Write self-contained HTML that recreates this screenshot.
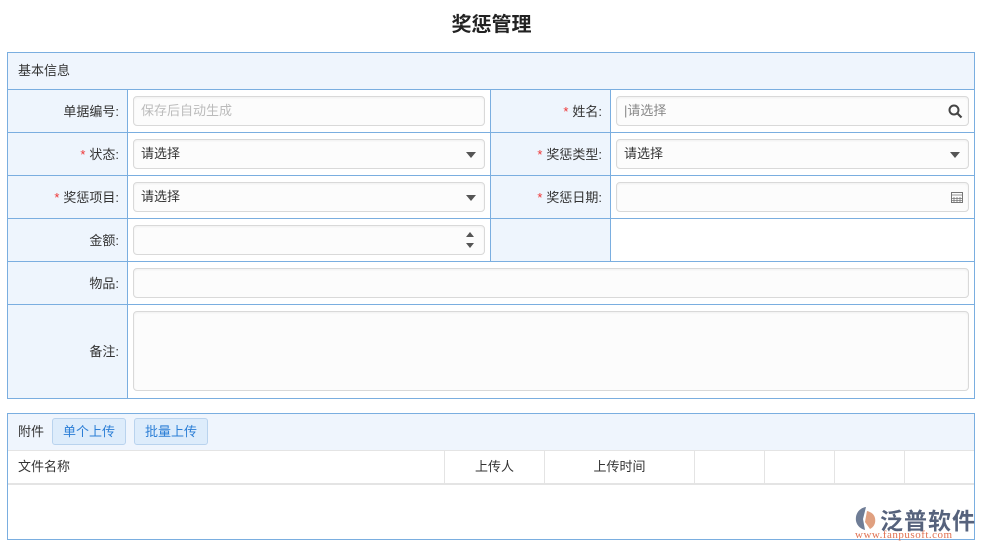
<!DOCTYPE html>
<html><head><meta charset="utf-8"><style>
*{box-sizing:border-box;margin:0;padding:0}
body{width:983px;height:551px;background:#fff;font-family:"Liberation Sans","Noto Sans CJK SC",sans-serif;font-size:13px;color:#333;position:relative;overflow:hidden}
.a{position:absolute}
.title{left:0;width:983px;top:8px;text-align:center;font-size:20px;font-weight:bold;color:#222}
.line{position:absolute;background:#7aaee0}
.lbl{position:absolute;background:#eef5fd;text-align:right;padding-right:8px;line-height:43px}
.star{color:#e33;margin-right:4px}
.inp{position:absolute;border:1px solid #d9d9d9;border-radius:4px;background:#fcfcfc;height:30px;line-height:28px;padding-left:7px;box-shadow:inset 0 1px 2px rgba(0,0,0,.05)}
.tri{position:absolute;right:8px;top:12px;width:0;height:0;border-left:5px solid transparent;border-right:5px solid transparent;border-top:6px solid #555}
.btn{position:absolute;top:418px;height:27px;line-height:25px;padding:0 10px;background:#ddecfb;border:1px solid #b9d3ee;border-radius:3px;color:#2b7ed6}
.th{position:absolute;top:450px;height:33px;line-height:33px;border-left:1px solid #e4e4e4}
</style></head><body>
<div class="a title">奖惩管理</div>
<div class="a" style="left:7px;top:52px;width:968px;height:347px;border:1px solid #7aaee0;background:#fff"></div>
<div class="a" style="left:8px;top:53px;width:966px;height:36px;background:#eff5fd;line-height:36px;padding-left:10px">基本信息</div>
<div class="lbl" style="left:8px;top:90px;width:119px;height:42px">单据编号:</div>
<div class="lbl" style="left:8px;top:133px;width:119px;height:42px"><span class="star">*</span>状态:</div>
<div class="lbl" style="left:8px;top:176px;width:119px;height:42px"><span class="star">*</span>奖惩项目:</div>
<div class="lbl" style="left:8px;top:219px;width:119px;height:42px">金额:</div>
<div class="lbl" style="left:8px;top:262px;width:119px;height:42px">物品:</div>
<div class="lbl" style="left:8px;top:305px;width:119px;height:93px;line-height:93px">备注:</div>
<div class="lbl" style="left:491px;top:90px;width:119px;height:42px"><span class="star">*</span>姓名:</div>
<div class="lbl" style="left:491px;top:133px;width:119px;height:42px"><span class="star">*</span>奖惩类型:</div>
<div class="lbl" style="left:491px;top:176px;width:119px;height:42px"><span class="star">*</span>奖惩日期:</div>
<div class="lbl" style="left:491px;top:219px;width:119px;height:42px"></div>
<div class="line" style="left:7px;top:89px;width:968px;height:1px"></div>
<div class="line" style="left:7px;top:132px;width:968px;height:1px"></div>
<div class="line" style="left:7px;top:175px;width:968px;height:1px"></div>
<div class="line" style="left:7px;top:218px;width:968px;height:1px"></div>
<div class="line" style="left:7px;top:261px;width:968px;height:1px"></div>
<div class="line" style="left:7px;top:304px;width:968px;height:1px"></div>
<div class="line" style="left:127px;top:89px;width:1px;height:309px"></div>
<div class="line" style="left:490px;top:89px;width:1px;height:172px"></div>
<div class="line" style="left:610px;top:89px;width:1px;height:172px"></div>
<div class="inp" style="left:133px;top:96px;width:352px;color:#bbb">保存后自动生成</div>
<div class="inp" style="left:133px;top:139px;width:352px">请选择<div class="tri"></div></div>
<div class="inp" style="left:133px;top:182px;width:352px">请选择<div class="tri"></div></div>
<div class="inp" style="left:133px;top:225px;width:352px"><div class="a" style="right:10px;top:6px;border-left:4px solid transparent;border-right:4px solid transparent;border-bottom:5px solid #555"></div><div class="a" style="right:10px;top:17px;border-left:4px solid transparent;border-right:4px solid transparent;border-top:5px solid #555"></div></div>
<div class="inp" style="left:616px;top:96px;width:353px;color:#888">|请选择<svg class="a" style="right:5px;top:7px" width="15" height="15" viewBox="0 0 15 15"><circle cx="6" cy="6" r="4.5" fill="none" stroke="#444" stroke-width="2"/><path d="M9.5 9.5L13.5 13.5" stroke="#444" stroke-width="2.2"/></svg></div>
<div class="inp" style="left:616px;top:139px;width:353px">请选择<div class="tri"></div></div>
<div class="inp" style="left:616px;top:182px;width:353px"><svg class="a" style="right:5px;top:8px" width="12" height="12" viewBox="0 0 12 12"><rect x="0.5" y="1.5" width="11" height="10" fill="none" stroke="#777"/><path d="M0.5 4h11M3 6v5M6 6v5M9 6v5M0.5 7.5h11M0.5 9.5h11" stroke="#777" stroke-width=".8"/></svg></div>
<div class="inp" style="left:133px;top:268px;width:836px"></div>
<div class="inp" style="left:133px;top:311px;width:836px;height:80px"></div>
<div class="a" style="left:7px;top:413px;width:968px;height:127px;border:1px solid #7aaee0"></div>
<div class="a" style="left:8px;top:414px;width:966px;height:36px;background:#eff5fd;line-height:36px;padding-left:10px">附件</div>
<div class="btn" style="left:52px">单个上传</div>
<div class="btn" style="left:134px">批量上传</div>
<div class="a" style="left:8px;top:450px;width:966px;height:1px;background:#e4e4e4"></div>
<div class="a" style="left:8px;top:483px;width:966px;height:2px;background:#e4e4e4"></div>
<div class="th" style="left:8px;width:436px;border:none;padding-left:10px">文件名称</div>
<div class="th" style="left:444px;width:100px;text-align:center">上传人</div>
<div class="th" style="left:544px;width:150px;text-align:center">上传时间</div>
<div class="th" style="left:694px;width:70px"></div>
<div class="th" style="left:764px;width:70px"></div>
<div class="th" style="left:834px;width:70px"></div>
<div class="th" style="left:904px;width:70px"></div>
<svg class="a" style="left:852px;top:505px" width="26" height="26" viewBox="0 0 26 26"><path d="M14 2C7 3 3 9 4 16c1 5 5 8 9 9L11 14 14 2z" fill="#6f7d96"/><path d="M15 6l-2 11 5 7c4-2 6-6 5-11-1-4-4-6-8-7z" fill="#e0a080"/></svg>
<div class="a" style="left:880px;top:502px;font-size:23px;font-weight:bold;color:#56627c;letter-spacing:1px">泛普软件</div>
<div class="a" style="left:855px;top:529px;font-size:11px;color:#e07050;font-family:'Liberation Serif',serif;letter-spacing:.5px">www.fanpusoft.com</div>
</body></html>
